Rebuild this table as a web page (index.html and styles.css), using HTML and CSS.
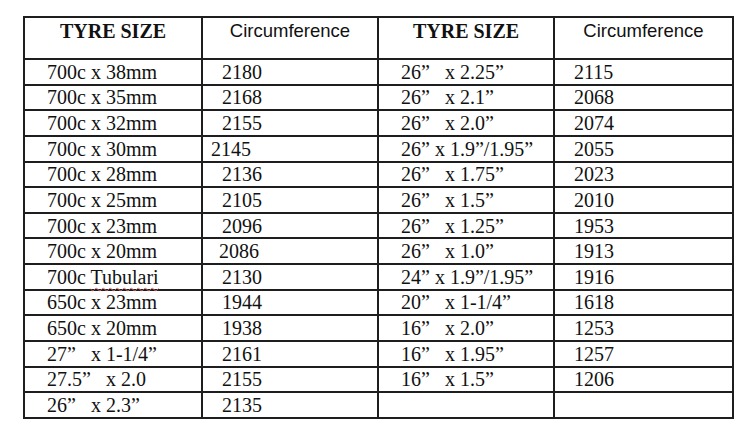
FILE: index.html
```html
<!DOCTYPE html>
<html>
<head>
<meta charset="utf-8">
<link rel="stylesheet" href="styles.css">
</head>
<body>
<table class="tyres">
  <colgroup>
    <col class="c1"><col class="c2"><col class="c3"><col class="c4">
  </colgroup>
  <thead>
    <tr class="head">
      <th class="size-h">TYRE SIZE</th>
      <th class="circ-h">Circumference</th>
      <th class="size-h">TYRE SIZE</th>
      <th class="circ-h">Circumference</th>
    </tr>
  </thead>
  <tbody>
    <tr><td class="size">700c x 38mm</td><td class="num">2180</td><td class="size">26”   x 2.25”</td><td class="num">2115</td></tr>
    <tr><td class="size">700c x 35mm</td><td class="num">2168</td><td class="size">26”   x 2.1”</td><td class="num">2068</td></tr>
    <tr><td class="size">700c x 32mm</td><td class="num">2155</td><td class="size">26”   x 2.0”</td><td class="num">2074</td></tr>
    <tr><td class="size">700c x 30mm</td><td class="num num-tight">2145</td><td class="size">26” x 1.9”/1.95”</td><td class="num">2055</td></tr>
    <tr><td class="size">700c x 28mm</td><td class="num">2136</td><td class="size">26”   x 1.75”</td><td class="num">2023</td></tr>
    <tr><td class="size">700c x 25mm</td><td class="num">2105</td><td class="size">26”   x 1.5”</td><td class="num">2010</td></tr>
    <tr><td class="size">700c x 23mm</td><td class="num">2096</td><td class="size">26”   x 1.25”</td><td class="num">1953</td></tr>
    <tr><td class="size">700c x 20mm</td><td class="num num-mid">2086</td><td class="size">26”   x 1.0”</td><td class="num">1913</td></tr>
    <tr><td class="size">700c <span class="misspelt">Tubulari</span></td><td class="num">2130</td><td class="size">24” x 1.9”/1.95”</td><td class="num">1916</td></tr>
    <tr><td class="size">650c x 23mm</td><td class="num">1944</td><td class="size">20”   x 1-1/4”</td><td class="num">1618</td></tr>
    <tr><td class="size">650c x 20mm</td><td class="num">1938</td><td class="size">16”   x 2.0”</td><td class="num">1253</td></tr>
    <tr><td class="size">27”   x 1-1/4”</td><td class="num">2161</td><td class="size">16”   x 1.95”</td><td class="num">1257</td></tr>
    <tr><td class="size">27.5”   x 2.0</td><td class="num">2155</td><td class="size">16”   x 1.5”</td><td class="num">1206</td></tr>
    <tr><td class="size">26”   x 2.3”</td><td class="num">2135</td><td class="size"></td><td class="num"></td></tr>
  </tbody>
</table>
</body>
</html>
```
FILE: styles.css
```css
html, body {
  margin: 0;
  background: #ffffff;
}
body {
  padding: 16px 0 0 23px;
  font-family: "Liberation Serif", "Times New Roman", serif;
  color: #111111;
}
.tyres {
  border-collapse: collapse;
  table-layout: fixed;
  width: 709px;
  border: 2px solid #1e1e1e;
}
.c1 { width: 178px; }
.c2 { width: 176px; }
.c3 { width: 176px; }
.c4 { width: 179px; }
.tyres th, .tyres td {
  border: 2px solid #1e1e1e;
  padding: 0;
  white-space: pre;
  font-size: 20px;
  line-height: 22px;
}
.tyres .head th {
  vertical-align: top;
  padding-top: 2px;
  text-align: center;
}
.head {
  height: 42px;
}
.tyres th.size-h {
  font-family: "Liberation Serif", "Times New Roman", serif;
  font-weight: bold;
}
.tyres th.circ-h {
  font-family: "Liberation Sans", Arial, sans-serif;
  font-weight: normal;
  font-size: 18.5px;
}
tbody tr {
  height: 25.64px;
}
.tyres tbody td {
  vertical-align: middle;
}
.tyres td.size {
  padding-left: 22px;
}
.tyres td.num {
  padding-left: 19px;
}
.tyres td.num-tight {
  padding-left: 8px;
}
.tyres td.num-mid {
  padding-left: 16px;
}
.misspelt {
  text-decoration: underline wavy #d06a6a;
  text-decoration-thickness: 1px;
  text-underline-offset: 3px;
}
```
